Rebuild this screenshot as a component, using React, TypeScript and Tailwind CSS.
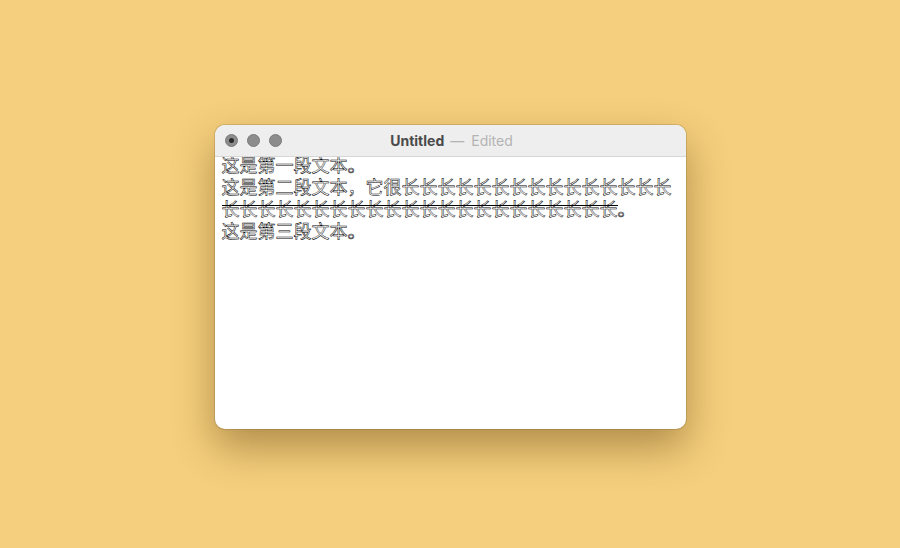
import React from 'react';

const longRun = (n: number) => '长'.repeat(n);

const TrafficLight = ({ dot }: { dot?: boolean }) => (
  <div className="w-[13px] h-[13px] rounded-full bg-[#8c8c8c] border border-[#7a7a7a] flex items-center justify-center">
    {dot && <div className="w-[5px] h-[5px] rounded-full bg-[#2a2a2a]" />}
  </div>
);

export default function App() {
  const outline = 'text-transparent [-webkit-text-stroke:0.5px_#000]';
  return (
    <div className="w-[900px] h-[548px] bg-[#f5cf7d] flex justify-center pt-[125px]">
      <div className="w-[471px] h-[304px] rounded-[10px] bg-white overflow-hidden flex flex-col shadow-[0_18px_40px_rgba(90,60,10,0.45),0_0_0_1px_rgba(0,0,0,0.12)]">
        <div className="h-[32px] shrink-0 bg-[#eeeeee] border-b border-[#d6d6d6] flex items-center relative font-['Inter','Liberation_Sans',sans-serif]">
          <div className="flex items-center gap-[9px] pl-[10px]">
            <TrafficLight dot />
            <TrafficLight />
            <TrafficLight />
          </div>
          <div className="absolute inset-0 flex items-center justify-center text-[14px] pl-[3px] pointer-events-none">
            <span className="font-bold text-[#4a4a4a]">Untitled</span>
            <span className="text-[#b3b3b3] ml-[6px]">—</span>
            <span className="text-[#b3b3b3] ml-[7px]">Edited</span>
          </div>
        </div>
        <div className={`px-[7px] -mt-[4px] text-[18px] leading-[22px] font-['Noto_Sans_CJK_SC',sans-serif] ${outline}`}>
          <p>这是第一段文本。</p>
          <p>
            这是第二段文本，它很{longRun(15)}
            <span className="bg-[linear-gradient(#000,#000)] bg-no-repeat bg-[length:100%_1px] bg-[position:0_38%]">{longRun(22)}</span>。
          </p>
          <p>这是第三段文本。</p>
        </div>
      </div>
    </div>
  );
}
